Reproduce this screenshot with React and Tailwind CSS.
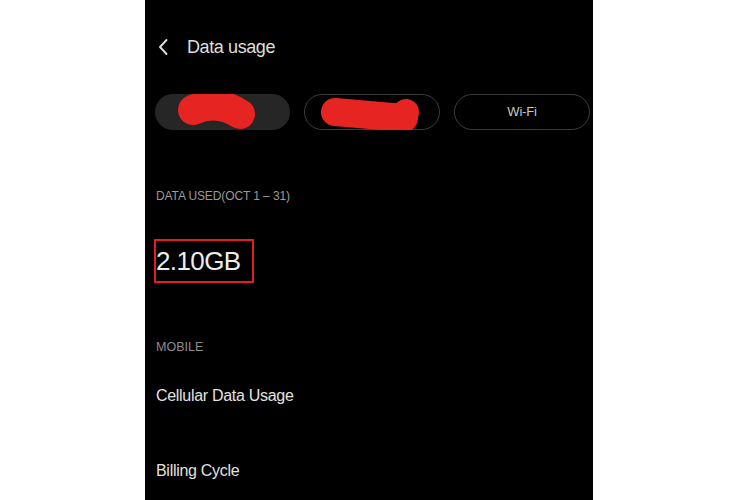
import React from "react";

export default function App() {
  return (
    <div
      className="w-[750px] h-[500px] bg-white flex overflow-hidden"
      style={{ fontFamily: '"Liberation Sans", Arial, sans-serif' }}
    >
      <div className="ml-[145px] w-[448px] h-[500px] bg-black flex flex-col pl-[11px] pr-[3px]">
        {/* Header */}
        <div className="mt-[36px] h-[22px] flex items-center">
          <svg width="14" height="18" viewBox="0 0 14 18" className="ml-[1px]">
            <path d="M9.5 2 L3 9 L9.5 16" fill="none" stroke="#dcdcdc" strokeWidth="1.9" strokeLinecap="round" strokeLinejoin="round" />
          </svg>
          <span className="ml-[16px] text-[18px] tracking-[-0.4px] text-[#dedede] leading-none">Data usage</span>
        </div>

        {/* Pills */}
        <div className="mt-[36px] flex gap-[14px] -ml-[1px]">
          <div className="relative w-[135px] h-[36px] rounded-full bg-[#262626]">
            <svg className="absolute left-0 top-0" width="135" height="36" viewBox="0 0 135 36">
              <path d="M38 16 Q 62 5 85 20" fill="none" stroke="#e62422" strokeWidth="30" strokeLinecap="round" />
            </svg>
          </div>
          <div className="relative w-[136px] h-[36px] rounded-full border border-[#3d3d3d]">
            <svg className="absolute -left-px -top-px" width="136" height="36" viewBox="0 0 136 36">
              <path d="M31 18 Q 65 21 100 24" fill="none" stroke="#e62422" strokeWidth="28" strokeLinecap="round" />
              <circle cx="102" cy="18" r="13" fill="#e62422" />
            </svg>
          </div>
          <div className="w-[136px] h-[36px] rounded-full border border-[#3d3d3d] flex items-center justify-center">
            <span className="text-[13px] text-[#c9c9c9] tracking-[-0.2px]">Wi-Fi</span>
          </div>
        </div>

        {/* Data used label */}
        <div className="mt-[58px] h-[16px] flex items-center text-[12px] text-[#9a9a9a] tracking-[-0.1px] leading-none">
          DATA USED(OCT 1 – 31)
        </div>

        {/* Amount */}
        <div className="mt-[35px] -ml-[2px] w-[100px] h-[44px] border-2 border-[#e02020] flex items-center">
          <span className="text-[26px] text-[#ececec] tracking-[-0.6px] leading-none">2.10GB</span>
        </div>

        {/* Mobile label */}
        <div className="mt-[56px] h-[16px] flex items-center text-[12.5px] text-[#8f8f8f] leading-none">
          MOBILE
        </div>

        <div className="mt-[31px] h-[20px] flex items-center text-[16px] text-[#e2e2e2] tracking-[-0.3px] leading-none">
          Cellular Data Usage
        </div>

        <div className="mt-[55px] h-[20px] flex items-center text-[16px] text-[#e2e2e2] tracking-[-0.3px] leading-none">
          Billing Cycle
        </div>
      </div>
    </div>
  );
}
